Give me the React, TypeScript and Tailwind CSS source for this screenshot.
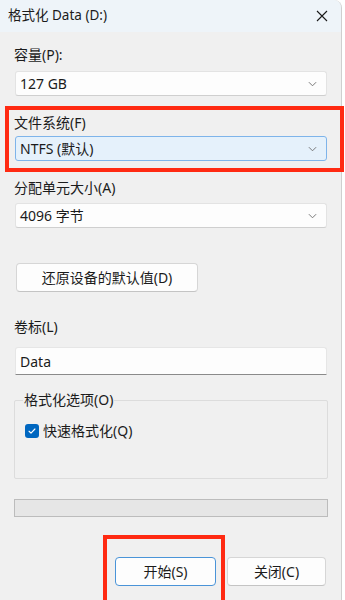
import { useState } from 'react'

// ── Icons ──────────────────────────────────────────────────────────────────────

function CloseIcon() {
  return (
    <svg viewBox="0 0 12 12" className="size-[12px]" fill="none" stroke="#1a1a1a" strokeWidth="1.1" aria-hidden="true">
      <path d="M1 1l10 10M11 1L1 11" />
    </svg>
  )
}

function ChevronDown() {
  return (
    <svg viewBox="0 0 10 6" className="w-[9px] h-[6px]" fill="none" stroke="#6b6b6b" strokeWidth="1" aria-hidden="true">
      <path d="M1 1l4 4 4-4" />
    </svg>
  )
}

function CheckMark() {
  return (
    <svg viewBox="0 0 12 12" className="size-[10px]" fill="none" stroke="#ffffff" strokeWidth="1.4" strokeLinecap="round" strokeLinejoin="round" aria-hidden="true">
      <path d="M2.5 6.3l2.3 2.3 4.7-5" />
    </svg>
  )
}

// ── Controls ───────────────────────────────────────────────────────────────────

function Combo({ value, focused = false }: { value: string; focused?: boolean }) {
  return (
    <div
      className={
        focused
          ? 'ml-px w-[312px] h-[25px] flex items-center justify-between pl-[4px] pr-[9px] rounded-[3px] border border-[#7eb4ea] bg-[#e5f1fb]'
          : 'ml-px w-[312px] h-[25px] flex items-center justify-between pl-[4px] pr-[9px] rounded-[3px] border border-[#e3e3e3] border-b-[#cfcfcf] bg-[#fdfdfd]'
      }
    >
      <span className="text-[14px] text-[#1b1b1b]">{value}</span>
      <ChevronDown />
    </div>
  )
}

function Label({ children, className = '' }: { children: string; className?: string }) {
  return <div className={`h-[18px] leading-[18px] text-[14px] text-[#1b1b1b] ${className}`}>{children}</div>
}

// ── Dialog ─────────────────────────────────────────────────────────────────────

export default function App() {
  const [quick, setQuick] = useState(true)

  return (
    <div
      className="relative w-[345px] h-[600px] bg-white overflow-hidden"
      style={{ fontFamily: '"Segoe UI", "Noto Sans", "Noto Sans CJK SC", sans-serif' }}
    >
      <div className="w-[342px] h-[600px] bg-[#f0f0f0] border-r border-[#cfcfcf] rounded-tr-[8px] overflow-hidden">
        {/* Title bar */}
        <div className="h-[32px] bg-[#eef4f9] flex items-center justify-between pl-[8px] pr-[13px]">
          <span className="text-[13.5px] text-[#1b1b1b] leading-none">格式化 Data (D:)</span>
          <CloseIcon />
        </div>

        {/* Body */}
        <div className="px-[14px] flex flex-col">
          <Label className="mt-[14px]">容量(P):</Label>
          <div className="mt-[7px]"><Combo value="127 GB" /></div>

          <Label className="mt-[18px]">文件系统(F)</Label>
          <div className="mt-[4px]"><Combo value="NTFS (默认)" focused /></div>

          <Label className="mt-[18px]">分配单元大小(A)</Label>
          <div className="mt-[6px]"><Combo value="4096 字节" /></div>

          <button className="mt-[35px] ml-[2px] w-[182px] h-[29px] rounded-[4px] border border-[#d6d6d6] border-b-[#c4c4c4] bg-[#fdfdfd] text-[14px] text-[#1b1b1b]">
            还原设备的默认值(D)
          </button>

          <Label className="mt-[26px]">卷标(L)</Label>
          <div className="mt-[11px] ml-px w-[312px] h-[28px] flex items-center pl-[4px] rounded-t-[3px] bg-[#fdfdfd] border border-[#e6e6e6] border-b-[#8a8a8a] text-[14px] text-[#1b1b1b]">
            Data
          </div>

          {/* Format options */}
          <div className="mt-[25px] w-[314px] h-[79px] border border-[#dcdcdc] rounded-[2px] flex flex-col">
            <span className="-mt-[10px] ml-[8px] self-start px-px bg-[#f0f0f0] h-[18px] leading-[18px] text-[14px] text-[#1b1b1b]">格式化选项(O)</span>
            <label className="mt-[13px] ml-[10px] flex items-center gap-[4px] cursor-default" onClick={() => setQuick(!quick)}>
              <span className={quick ? 'size-[14px] rounded-[3px] bg-[#0067c0] flex items-center justify-center' : 'size-[14px] rounded-[3px] border border-[#8a8a8a] bg-white'}>
                {quick && <CheckMark />}
              </span>
              <span className="text-[14px] text-[#1b1b1b] leading-[18px]">快速格式化(Q)</span>
            </label>
          </div>

          {/* Progress */}
          <div className="mt-[20px] w-[314px] h-[18px] bg-[#e6e6e6] border border-[#bcbcbc]" />

          {/* Actions */}
          <div className="mt-[40px] flex justify-end gap-[11px] pr-px">
            <button className="w-[101px] h-[29px] rounded-[4px] border border-[#4a94d8] bg-[#fdfdfd] text-[14px] text-[#1b1b1b]">开始(S)</button>
            <button className="w-[99px] h-[29px] rounded-[4px] border border-[#d6d6d6] border-b-[#c4c4c4] bg-[#fdfdfd] text-[14px] text-[#1b1b1b]">关闭(C)</button>
          </div>
        </div>
      </div>

      {/* Annotation outlines */}
      <div className="absolute left-[5px] top-[106px] w-[339px] h-[66px] border-[4px] border-[#ff2a12] pointer-events-none" />
      <div className="absolute left-[103px] top-[535px] w-[122px] h-[65px] border-[4px] border-b-0 border-[#ff2a12] pointer-events-none" />
    </div>
  )
}
